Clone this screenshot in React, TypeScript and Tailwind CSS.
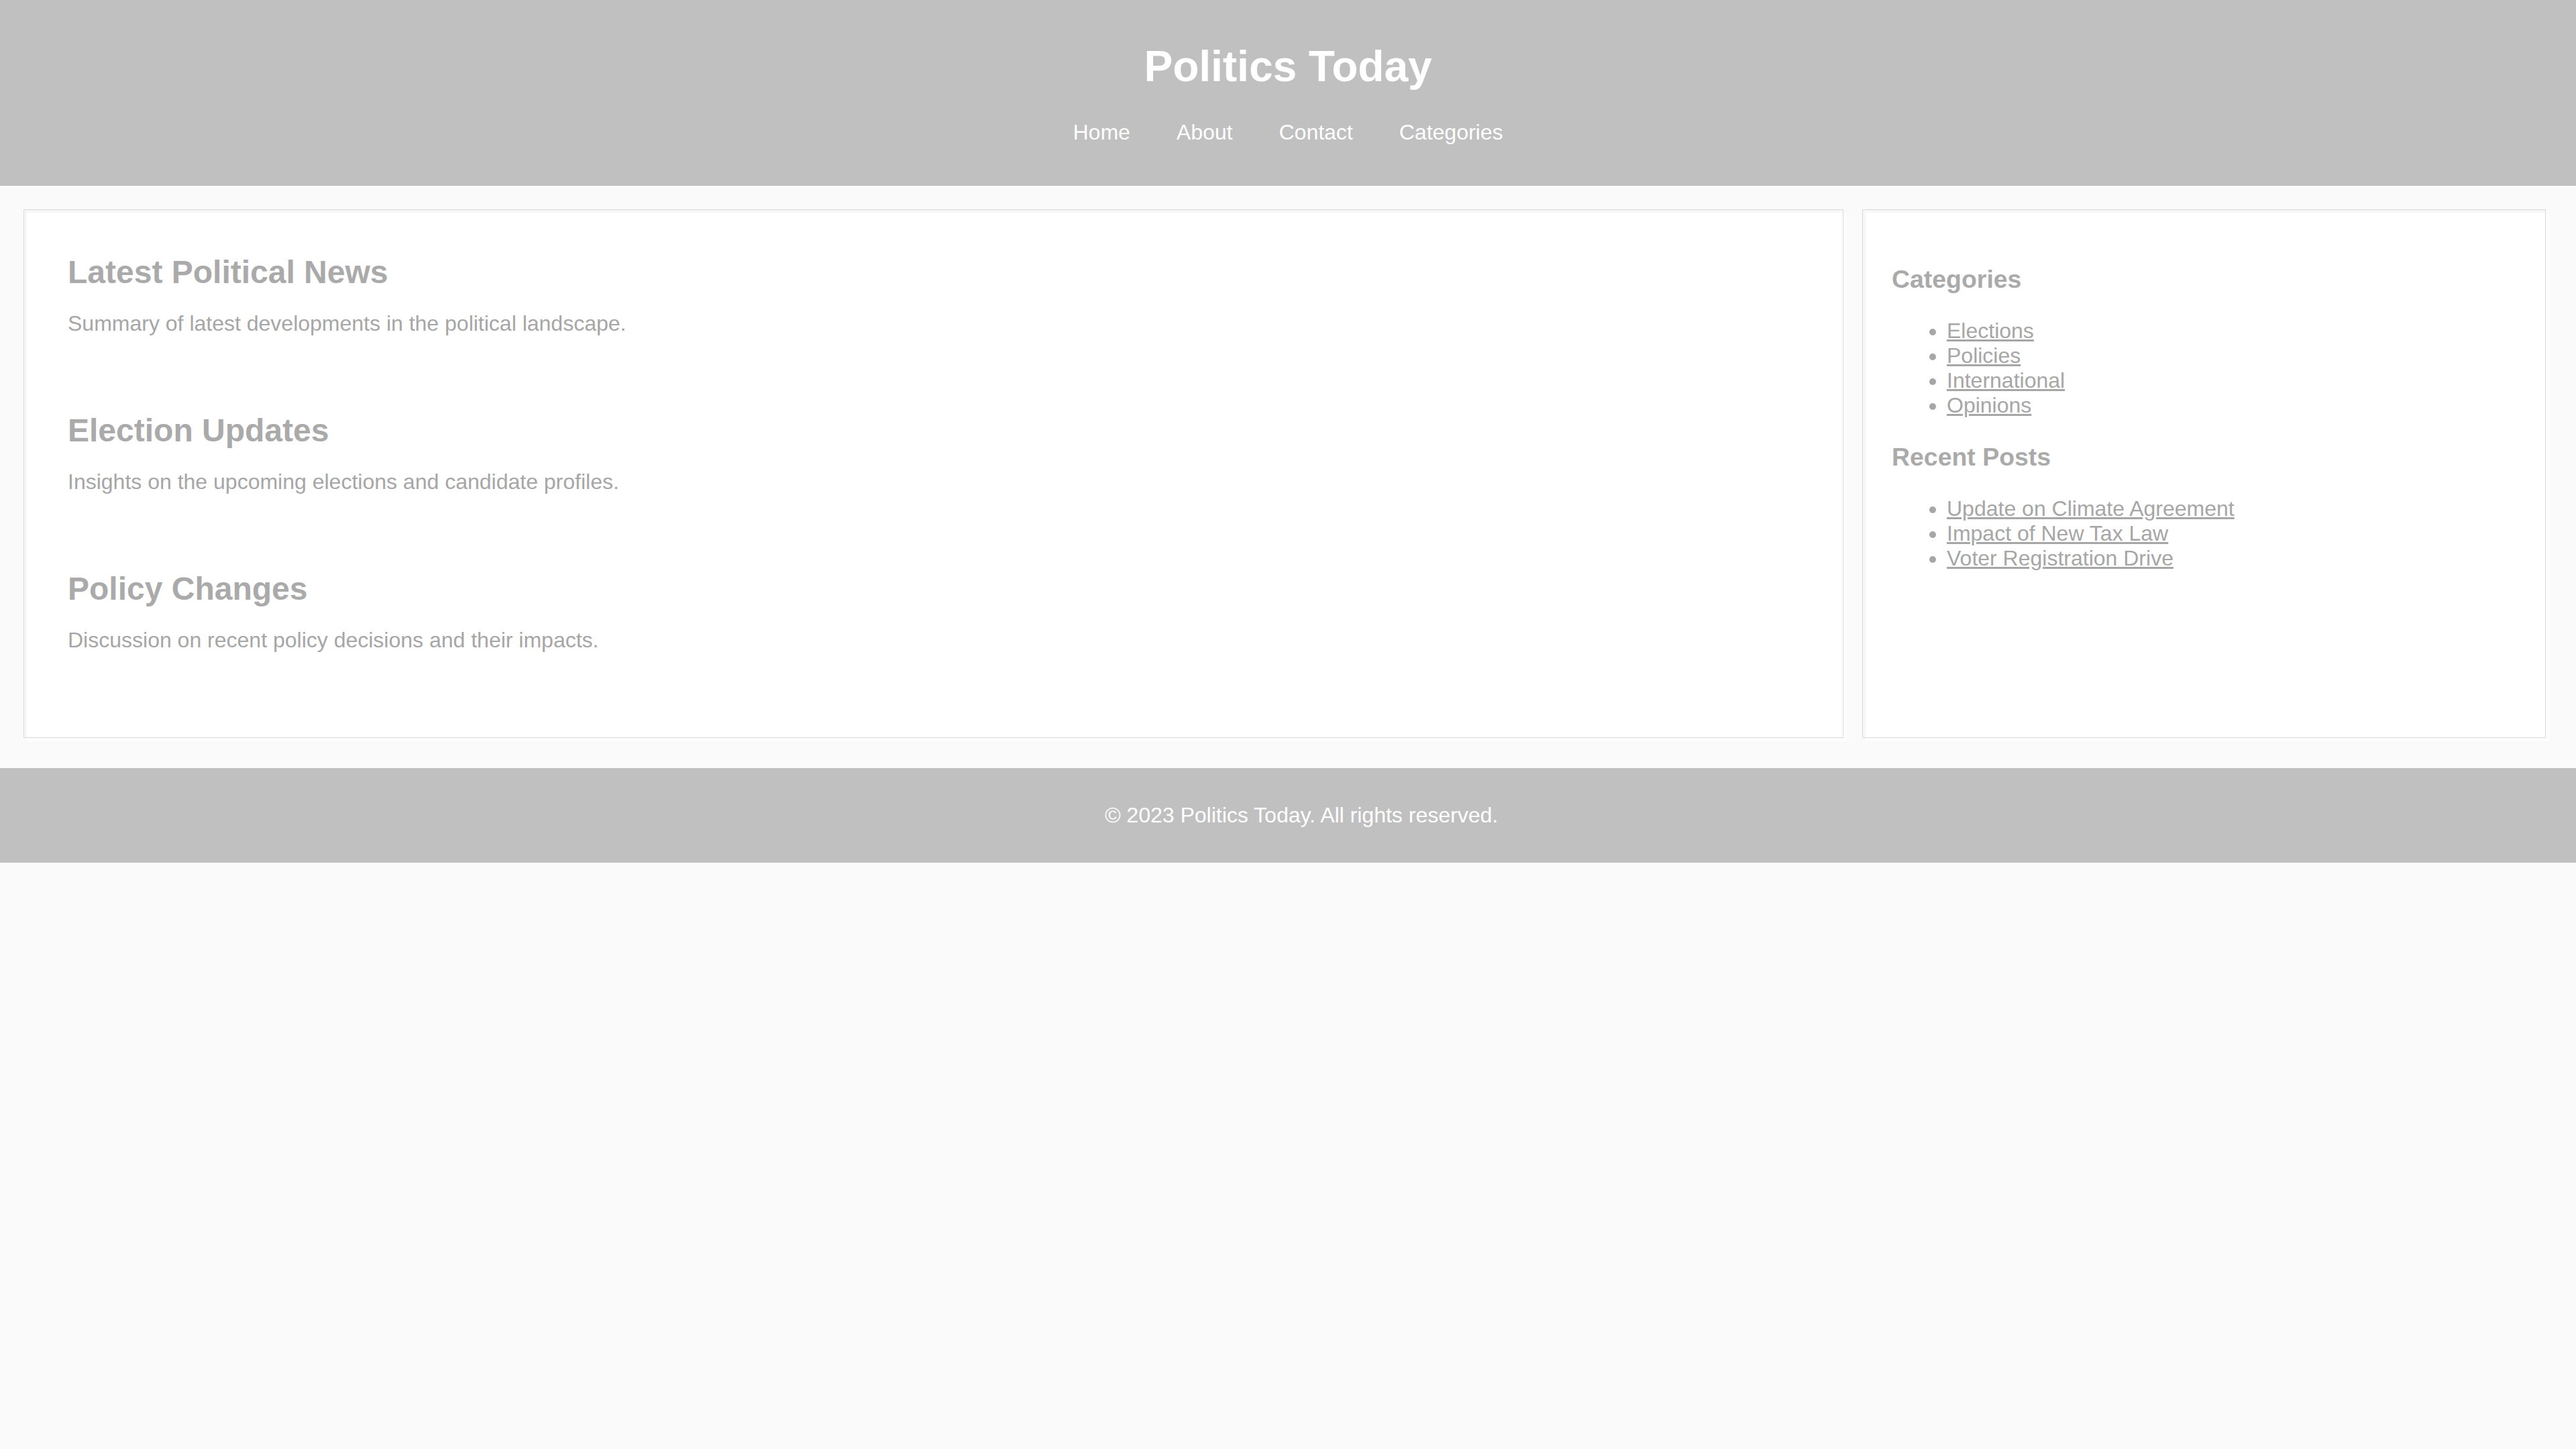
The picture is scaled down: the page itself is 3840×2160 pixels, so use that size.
const navLinks = ["Home", "About", "Contact", "Categories"];

const articles = [
  {
    title: "Latest Political News",
    summary: "Summary of latest developments in the political landscape.",
  },
  {
    title: "Election Updates",
    summary: "Insights on the upcoming elections and candidate profiles.",
  },
  {
    title: "Policy Changes",
    summary: "Discussion on recent policy decisions and their impacts.",
  },
];

const categories = ["Elections", "Policies", "International", "Opinions"];
const recentPosts = [
  "Update on Climate Agreement",
  "Impact of New Tax Law",
  "Voter Registration Drive",
];

// the cards have a faint offset edge: grey band inside top/left, white band outside bottom/right
const cardClass =
  "bg-white border border-[#d9d9d9] shadow-[inset_4px_4px_0_#f7f7f7,5px_6px_0_#fdfdfd]";

function SideList({ title, items, first }: { title: string; items: string[]; first?: boolean }) {
  return (
    <>
      <h3
        className={`text-[37.44px] leading-[1.15] font-bold text-[#aaaaaa] ${
          first ? "" : "mt-[37.4px]"
        }`}
      >
        {title}
      </h3>
      <ul className="mt-[37.4px] list-disc pl-[82px] text-[32px] leading-[1.15] text-[#a6a6a6]">
        {items.map((item) => (
          <li key={item}>
            <a href="#" className="underline">
              {item}
            </a>
          </li>
        ))}
      </ul>
    </>
  );
}

export default function App() {
  return (
    <div className="min-h-screen bg-[#fafafa] font-['Liberation_Sans',Arial,sans-serif]">
      <header className="bg-[#c0c0c0] pt-[63px] pb-[61.6px] text-center text-white">
        <h1 className="text-[64px] leading-[1.15] font-bold">Politics Today</h1>
        <nav className="mt-[42px]">
          <ul className="flex justify-center gap-[69px] text-[32px] leading-[1.15]">
            {navLinks.map((link) => (
              <li key={link}>
                <a href="#">{link}</a>
              </li>
            ))}
          </ul>
        </nav>
      </header>

      <main className="flex gap-[28px] pt-[35px] pl-[35px] pr-[45px] pb-[45px]">
        <section className={`flex-1 pt-[65px] pl-[65px] pr-[63px] pb-[126px] ${cardClass}`}>
          <div className="flex flex-col gap-[112.5px]">
            {articles.map((article) => (
              <article key={article.title} className="flex flex-col gap-[31.3px]">
                <h2 className="text-[48px] leading-[1.15] font-bold text-[#aaaaaa]">
                  {article.title}
                </h2>
                <p className="text-[32px] leading-[1.15] text-[#a6a6a6]">{article.summary}</p>
              </article>
            ))}
          </div>
        </section>

        <aside className={`w-[1019px] shrink-0 pt-[82px] pl-[43px] pr-[41px] ${cardClass}`}>
          <SideList title="Categories" items={categories} first />
          <SideList title="Recent Posts" items={recentPosts} />
        </aside>
      </main>

      <footer className="bg-[#c0c0c0] py-[52px] pl-[40px] text-center text-white">
        <p className="text-[32px] leading-[1.15]">© 2023 Politics Today. All rights reserved.</p>
      </footer>
    </div>
  );
}
